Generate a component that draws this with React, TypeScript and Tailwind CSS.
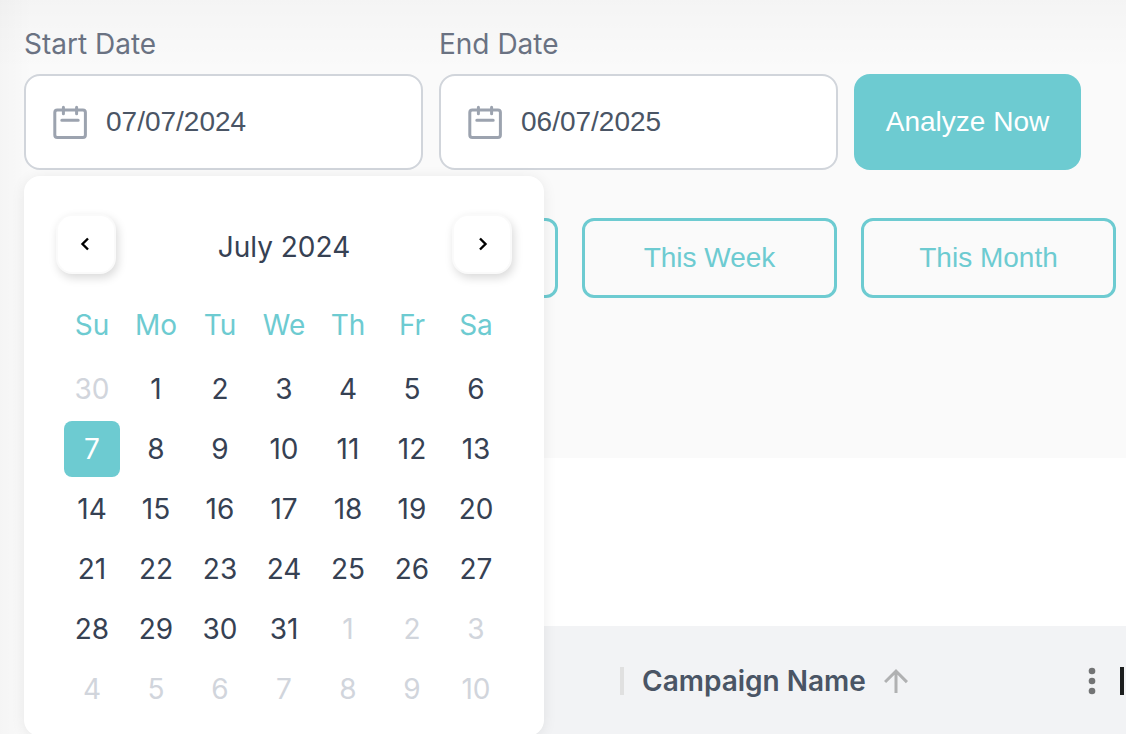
import React from "react";

const weekdays = ["Su", "Mo", "Tu", "We", "Th", "Fr", "Sa"];

// July 2024 starts on a Monday, so the grid opens on June 30
const days = Array.from({ length: 42 }, (_, i) => new Date(2024, 5, 30 + i));

function DateField({
  id,
  label,
  value,
  children,
}: {
  id: string;
  label: string;
  value: string;
  children?: React.ReactNode;
}) {
  return (
    <div className="relative flex-1 min-w-0">
      <label htmlFor={id} className="block h-[46px] text-[28px] leading-8 text-gray-500">
        {label}
      </label>
      <div className="flex items-center gap-4 h-24 px-6 rounded-2xl border-2 border-[#d1d5db] bg-white">
        <svg
          className="w-10 h-10 shrink-0"
          viewBox="0 0 40 40"
          fill="none"
          stroke="#9ca3af"
          strokeWidth="3"
          strokeLinecap="round"
        >
          <rect x="4.8" y="8" width="30.6" height="27.5" rx="2.5" />
          <path d="M13.4 5.2v6.6M26.6 5.2v6.6M11.8 18.3h16.4" />
        </svg>
        <input
          id={id}
          type="text"
          defaultValue={value}
          className="w-full min-w-0 bg-transparent outline-none font-['Liberation_Sans',sans-serif] text-[28px] leading-8 text-gray-600"
        />
      </div>
      {children}
    </div>
  );
}

function NavButton({ label, d }: { label: string; d: string }) {
  return (
    <button
      aria-label={label}
      className="flex items-center justify-center w-[60px] h-[60px] rounded-2xl border-2 border-[#fafafa] bg-white shadow-[2px_4px_10px_rgba(0,0,0,0.15)]"
    >
      <svg className="w-4 h-4" viewBox="0 0 16 16" fill="none" stroke="#000" strokeWidth="2.4">
        <path d={d} />
      </svg>
    </button>
  );
}

function Calendar() {
  return (
    <div className="absolute z-10 left-0 top-full mt-[6px] w-[520px] h-[560px] px-8 pt-[38px] rounded-2xl bg-white shadow-[0_2px_14px_rgba(0,0,0,0.08)]">
      <div className="flex items-center justify-between">
        <NavButton label="Previous month" d="M10 2.5 4.5 8l5.5 5.5" />
        <span className="pt-[6px] text-[28px] leading-8 text-gray-700">July 2024</span>
        <NavButton label="Next month" d="M6 2.5 11.5 8 6 13.5" />
      </div>
      <table className="mt-5 mx-1 w-[448px] table-fixed text-center text-[28px] leading-8">
        <thead>
          <tr className="h-[65px]">
            {weekdays.map((day) => (
              <th key={day} className="p-0 pb-1 font-normal text-[#6dcbd1]">
                {day}
              </th>
            ))}
          </tr>
        </thead>
        <tbody>
          {[0, 1, 2, 3, 4, 5].map((week) => (
            <tr key={week} className="h-[60px]">
              {days.slice(week * 7, week * 7 + 7).map((date) => {
                let color = "text-gray-700";
                if (date.getMonth() !== 6) color = "text-gray-300";
                else if (date.getDate() === 7) color = "bg-[#6dcbd1] text-white";
                return (
                  <td key={date.getTime()} className="p-0">
                    <button className={`block mx-auto w-14 h-14 rounded-lg ${color}`}>
                      {date.getDate()}
                    </button>
                  </td>
                );
              })}
            </tr>
          ))}
        </tbody>
      </table>
    </div>
  );
}

function Filters() {
  const quickButton =
    "h-20 rounded-xl border-3 border-[#6dcbd1] text-[28px] leading-8 text-[#6dcbd1] font-['Liberation_Sans',sans-serif]";
  return (
    <section className="h-[458px] pt-7">
      <div className="flex items-end gap-4 pl-6 pr-[45px]">
        <DateField id="start" label="Start Date" value="07/07/2024">
          <Calendar />
        </DateField>
        <DateField id="end" label="End Date" value="06/07/2025" />
        <button className="w-[227px] h-24 rounded-2xl bg-[#6dcbd1] text-white text-[28px] leading-8 font-['Liberation_Sans',sans-serif]">
          Analyze Now
        </button>
      </div>
      <div className="grid grid-cols-4 gap-6 mt-12 pl-6 pr-[10px]">
        <button aria-label="Today" className={quickButton}></button>
        <button aria-label="Yesterday" className={quickButton}></button>
        <button className={quickButton}>This Week</button>
        <button className={quickButton}>This Month</button>
      </div>
    </section>
  );
}

function CampaignTable() {
  return (
    <section className="ml-10 pt-[168px] bg-white">
      <div className="flex items-center h-[110px] pl-[580px] pr-[2px] bg-[#f2f3f5]">
        <div className="w-1 h-7 bg-[#e0e0e0]" />
        <span className="ml-[18px] text-[28px] leading-8 font-semibold text-gray-600 whitespace-nowrap">
          Campaign Name
        </span>
        <button aria-label="Sort" className="ml-3">
          <svg className="w-9 h-9" viewBox="0 0 24 24" fill="#b0b1b2">
            <path d="m4 12 1.41 1.41L11 7.83V20h2V7.83l5.58 5.59L20 12l-8-8-8 8z" />
          </svg>
        </button>
        <button aria-label="Column menu" className="ml-auto mr-2">
          <svg className="w-10 h-10" viewBox="0 0 24 24" fill="#737475">
            <circle cx="12" cy="6" r="2" />
            <circle cx="12" cy="12" r="2" />
            <circle cx="12" cy="18" r="2" />
          </svg>
        </button>
        <div className="w-1 h-7 bg-[#1c1e1e]" />
      </div>
    </section>
  );
}

function App() {
  return (
    <main className="h-screen overflow-hidden bg-[#fafafa] bg-[linear-gradient(to_right,rgba(0,0,0,0.018),transparent_32px),linear-gradient(to_bottom,rgba(0,0,0,0.025),transparent_70px)] font-['Inter',sans-serif]">
      <Filters />
      <CampaignTable />
    </main>
  );
}

export default App;
